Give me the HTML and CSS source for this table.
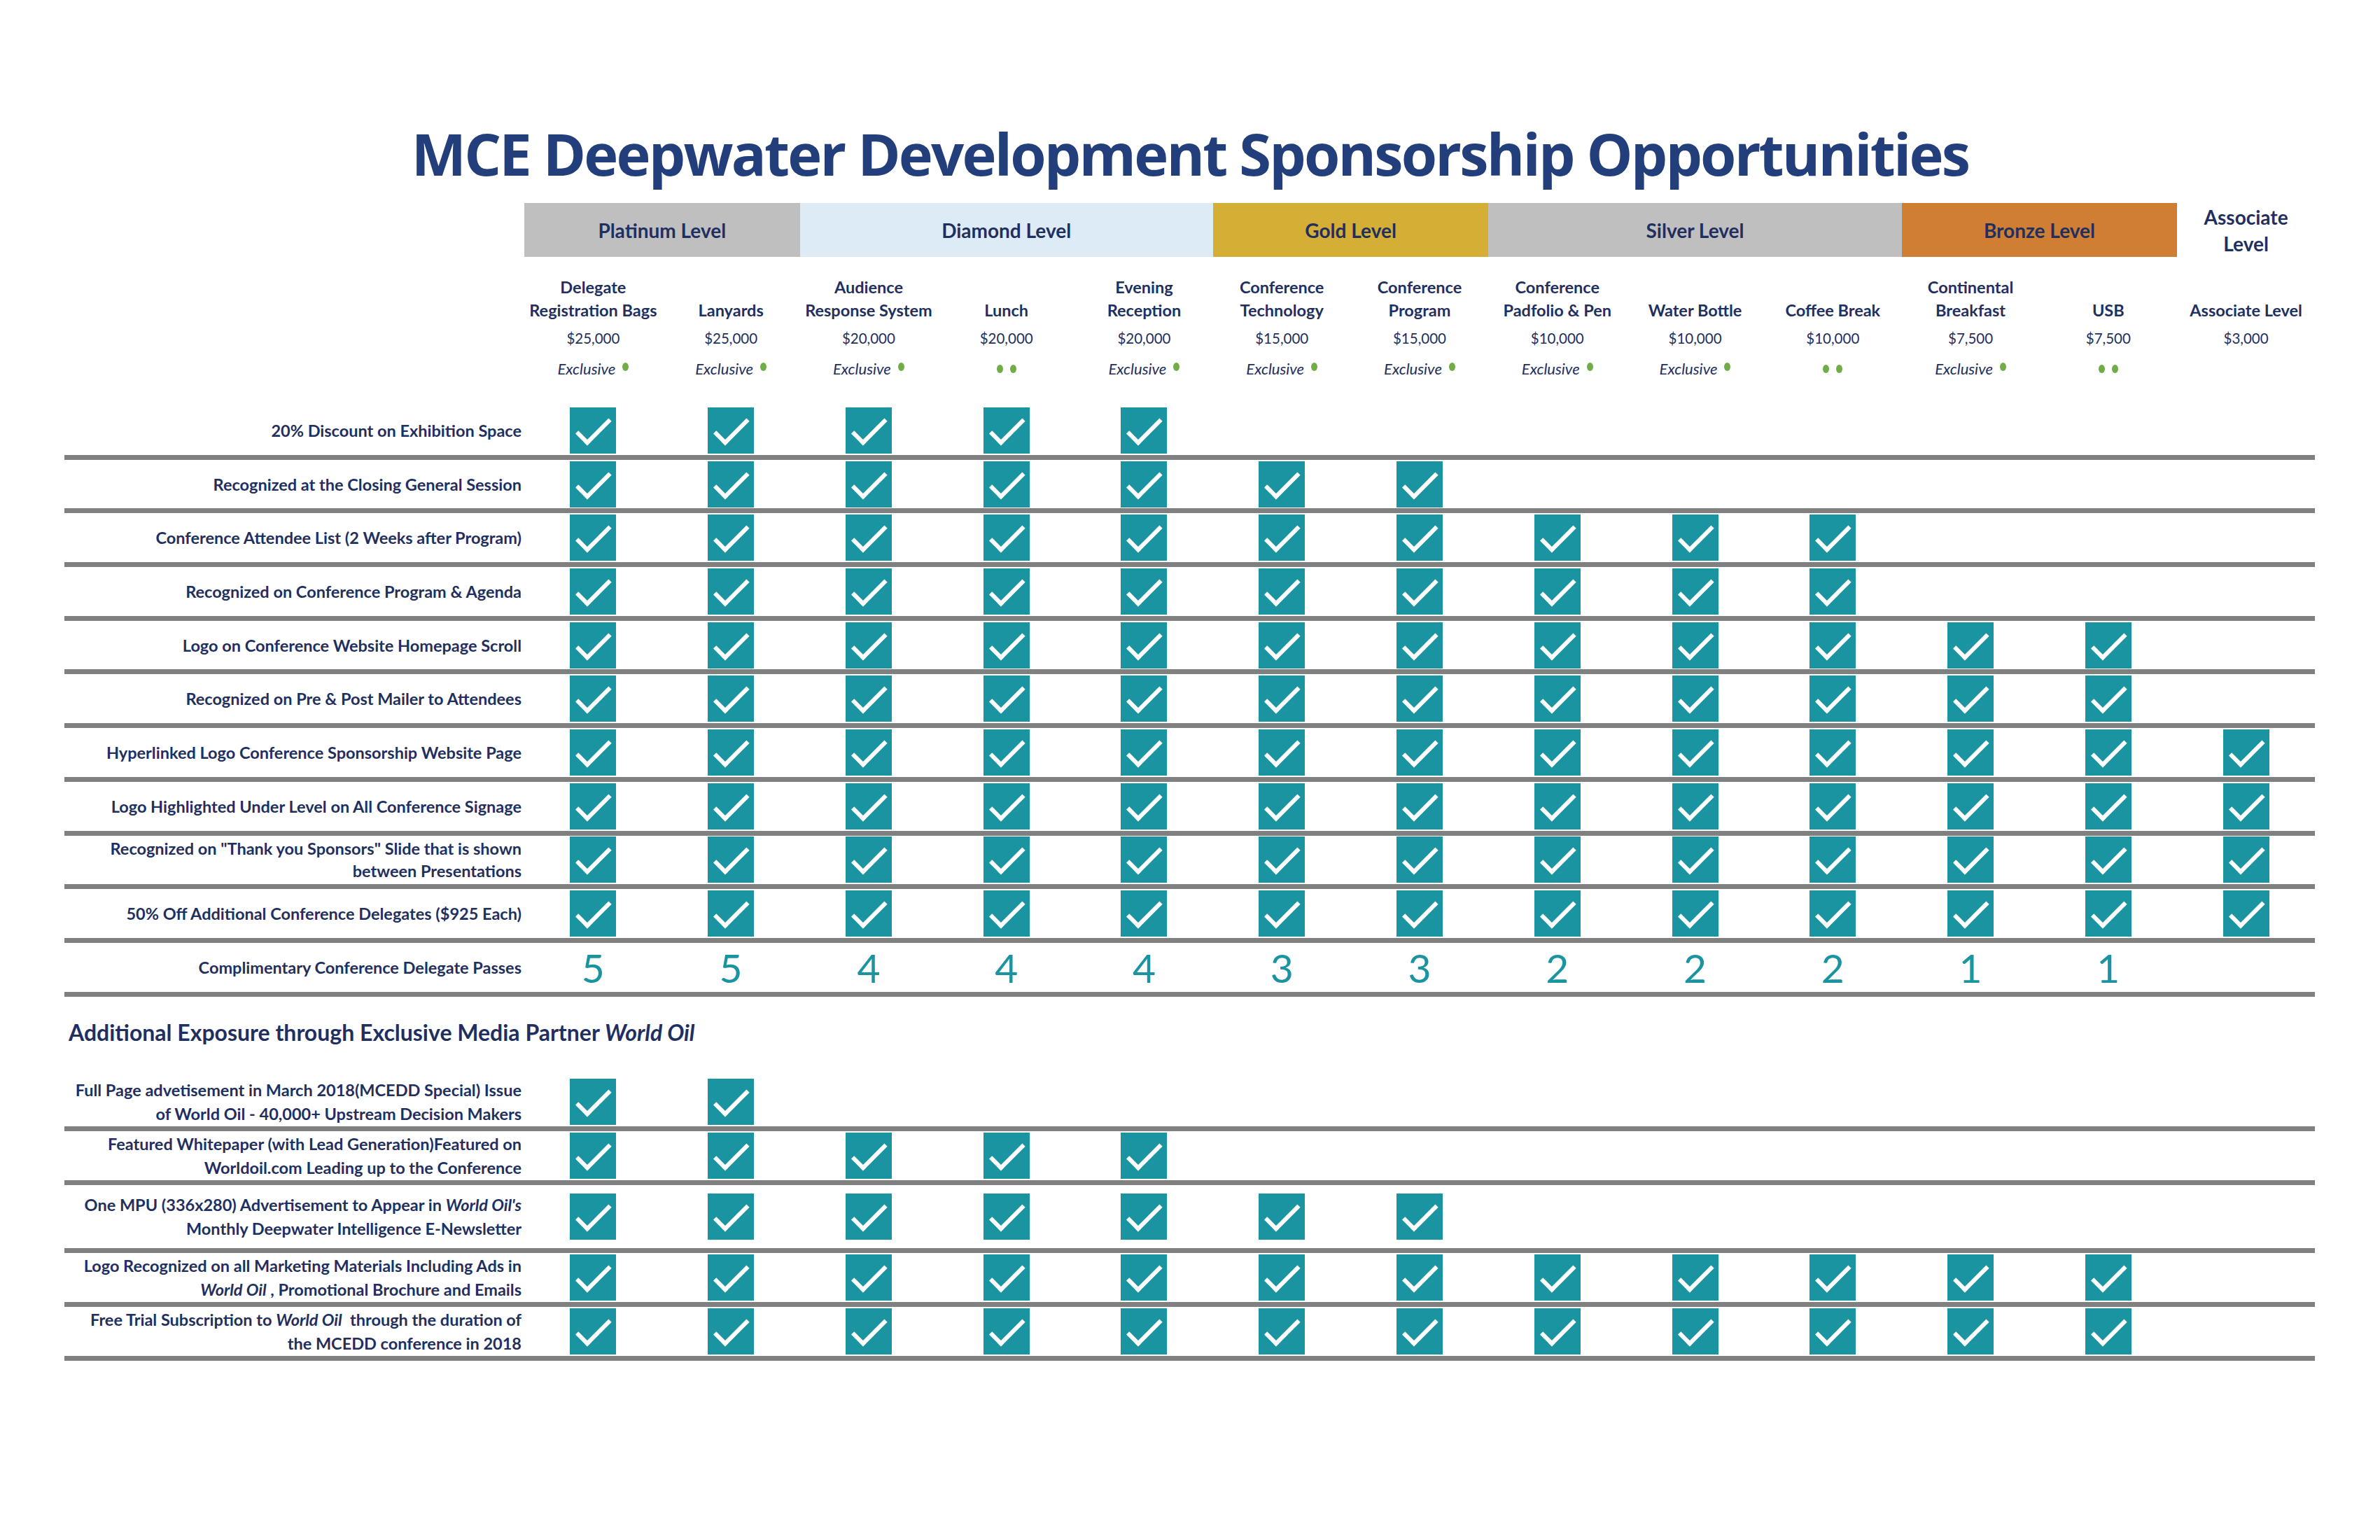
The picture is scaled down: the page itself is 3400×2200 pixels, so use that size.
FILE: index.html
```html
<!DOCTYPE html>
<html lang="en">
<head>
<meta charset="utf-8">
<title>MCE Deepwater Development Sponsorship Opportunities</title>
<link rel="stylesheet" href="styles.css">
</head>
<body>
<h1 class="title">MCE Deepwater Development Sponsorship Opportunities</h1>
<div class="sheet">
  <div class="grid levels">
    <div></div>
    <div class="lv plat">Platinum Level</div>
    <div class="lv dia">Diamond Level</div>
    <div class="lv gold">Gold Level</div>
    <div class="lv silv">Silver Level</div>
    <div class="lv bron">Bronze Level</div>
    <div class="lv assoc">Associate<br>Level</div>
  </div>
  <div class="grid heads">
    <div></div>
    <div class="ch"><div class="nm">Delegate<br>Registration Bags</div><div class="pr">$25,000</div><div class="ex">Exclusive<i class="dot"></i></div></div>
    <div class="ch"><div class="nm">Lanyards</div><div class="pr">$25,000</div><div class="ex">Exclusive<i class="dot"></i></div></div>
    <div class="ch"><div class="nm">Audience<br>Response System</div><div class="pr">$20,000</div><div class="ex">Exclusive<i class="dot"></i></div></div>
    <div class="ch"><div class="nm">Lunch</div><div class="pr">$20,000</div><div class="ex"><i class="dot pair"></i><i class="dot pair"></i></div></div>
    <div class="ch"><div class="nm">Evening<br>Reception</div><div class="pr">$20,000</div><div class="ex">Exclusive<i class="dot"></i></div></div>
    <div class="ch"><div class="nm">Conference<br>Technology</div><div class="pr">$15,000</div><div class="ex">Exclusive<i class="dot"></i></div></div>
    <div class="ch"><div class="nm">Conference<br>Program</div><div class="pr">$15,000</div><div class="ex">Exclusive<i class="dot"></i></div></div>
    <div class="ch"><div class="nm">Conference<br>Padfolio &amp; Pen</div><div class="pr">$10,000</div><div class="ex">Exclusive<i class="dot"></i></div></div>
    <div class="ch"><div class="nm">Water Bottle</div><div class="pr">$10,000</div><div class="ex">Exclusive<i class="dot"></i></div></div>
    <div class="ch"><div class="nm">Coffee Break</div><div class="pr">$10,000</div><div class="ex"><i class="dot pair"></i><i class="dot pair"></i></div></div>
    <div class="ch"><div class="nm">Continental<br>Breakfast</div><div class="pr">$7,500</div><div class="ex">Exclusive<i class="dot"></i></div></div>
    <div class="ch"><div class="nm">USB</div><div class="pr">$7,500</div><div class="ex"><i class="dot pair"></i><i class="dot pair"></i></div></div>
    <div class="ch"><div class="nm">Associate Level</div><div class="pr">$3,000</div></div>
  </div>

  <div class="grid row">
    <div class="lab">20% Discount on Exhibition Space</div>
    <div class="y"></div><div class="y"></div><div class="y"></div><div class="y"></div><div class="y"></div>
  </div>
  <div class="grid row">
    <div class="lab">Recognized at the Closing General Session</div>
    <div class="y"></div><div class="y"></div><div class="y"></div><div class="y"></div><div class="y"></div><div class="y"></div><div class="y"></div>
  </div>
  <div class="grid row">
    <div class="lab">Conference Attendee List (2 Weeks after Program)</div>
    <div class="y"></div><div class="y"></div><div class="y"></div><div class="y"></div><div class="y"></div><div class="y"></div><div class="y"></div><div class="y"></div><div class="y"></div><div class="y"></div>
  </div>
  <div class="grid row">
    <div class="lab">Recognized on Conference Program &amp; Agenda</div>
    <div class="y"></div><div class="y"></div><div class="y"></div><div class="y"></div><div class="y"></div><div class="y"></div><div class="y"></div><div class="y"></div><div class="y"></div><div class="y"></div>
  </div>
  <div class="grid row">
    <div class="lab">Logo on Conference Website Homepage Scroll</div>
    <div class="y"></div><div class="y"></div><div class="y"></div><div class="y"></div><div class="y"></div><div class="y"></div><div class="y"></div><div class="y"></div><div class="y"></div><div class="y"></div><div class="y"></div><div class="y"></div>
  </div>
  <div class="grid row">
    <div class="lab">Recognized on Pre &amp; Post Mailer to Attendees</div>
    <div class="y"></div><div class="y"></div><div class="y"></div><div class="y"></div><div class="y"></div><div class="y"></div><div class="y"></div><div class="y"></div><div class="y"></div><div class="y"></div><div class="y"></div><div class="y"></div>
  </div>
  <div class="grid row">
    <div class="lab">Hyperlinked Logo Conference Sponsorship Website Page</div>
    <div class="y"></div><div class="y"></div><div class="y"></div><div class="y"></div><div class="y"></div><div class="y"></div><div class="y"></div><div class="y"></div><div class="y"></div><div class="y"></div><div class="y"></div><div class="y"></div><div class="y"></div>
  </div>
  <div class="grid row">
    <div class="lab">Logo Highlighted Under Level on All Conference Signage</div>
    <div class="y"></div><div class="y"></div><div class="y"></div><div class="y"></div><div class="y"></div><div class="y"></div><div class="y"></div><div class="y"></div><div class="y"></div><div class="y"></div><div class="y"></div><div class="y"></div><div class="y"></div>
  </div>
  <div class="grid row">
    <div class="lab">Recognized on "Thank you Sponsors" Slide that is shown<br>between Presentations</div>
    <div class="y"></div><div class="y"></div><div class="y"></div><div class="y"></div><div class="y"></div><div class="y"></div><div class="y"></div><div class="y"></div><div class="y"></div><div class="y"></div><div class="y"></div><div class="y"></div><div class="y"></div>
  </div>
  <div class="grid row">
    <div class="lab">50% Off Additional Conference Delegates ($925 Each)</div>
    <div class="y"></div><div class="y"></div><div class="y"></div><div class="y"></div><div class="y"></div><div class="y"></div><div class="y"></div><div class="y"></div><div class="y"></div><div class="y"></div><div class="y"></div><div class="y"></div><div class="y"></div>
  </div>
  <div class="grid row">
    <div class="lab">Complimentary Conference Delegate Passes</div>
    <div class="n">5</div><div class="n">5</div><div class="n">4</div><div class="n">4</div><div class="n">4</div><div class="n">3</div><div class="n">3</div><div class="n">2</div><div class="n">2</div><div class="n">2</div><div class="n">1</div><div class="n">1</div>
  </div>

  <h2 class="sub">Additional Exposure through Exclusive Media Partner <em>World Oil</em></h2>

  <div class="grid row r2">
    <div class="lab">Full Page advetisement in March 2018(MCEDD Special) Issue<br>of World Oil - 40,000+ Upstream Decision Makers</div>
    <div class="y"></div><div class="y"></div>
  </div>
  <div class="grid row r2">
    <div class="lab">Featured Whitepaper (with Lead Generation)Featured on<br>Worldoil.com Leading up to the Conference</div>
    <div class="y"></div><div class="y"></div><div class="y"></div><div class="y"></div><div class="y"></div>
  </div>
  <div class="grid row r2 tall">
    <div class="lab">One MPU (336x280) Advertisement to Appear in <em>World Oil's</em><br>Monthly Deepwater Intelligence E-Newsletter</div>
    <div class="y"></div><div class="y"></div><div class="y"></div><div class="y"></div><div class="y"></div><div class="y"></div><div class="y"></div>
  </div>
  <div class="grid row r2">
    <div class="lab">Logo Recognized on all Marketing Materials Including Ads in<br><em>World Oil</em> , Promotional Brochure and Emails</div>
    <div class="y"></div><div class="y"></div><div class="y"></div><div class="y"></div><div class="y"></div><div class="y"></div><div class="y"></div><div class="y"></div><div class="y"></div><div class="y"></div><div class="y"></div><div class="y"></div>
  </div>
  <div class="grid row r2">
    <div class="lab">Free Trial Subscription to <em>World Oil</em>&nbsp; through the duration of<br>the MCEDD conference in 2018</div>
    <div class="y"></div><div class="y"></div><div class="y"></div><div class="y"></div><div class="y"></div><div class="y"></div><div class="y"></div><div class="y"></div><div class="y"></div><div class="y"></div><div class="y"></div><div class="y"></div>
  </div>
</div>
</body>
</html>
```
FILE: styles.css
```css
* { box-sizing: border-box; }

html, body {
  margin: 0;
  background: #ffffff;
}

body {
  width: 3400px;
  height: 2200px;
  overflow: hidden;
  font-family: Lato, "Open Sans", sans-serif;
  color: #1f2f5f;
}

.title {
  margin: 0 0 21px 0;
  padding-top: 169px;
  text-align: center;
  font-family: "Open Sans", sans-serif;
  font-weight: 700;
  font-size: 83px;
  line-height: 100px;
  letter-spacing: -2.8px;
  color: #223f7b;
}

.sheet {
  margin-left: 92px;
  width: 3215px;
}

.grid {
  display: grid;
  grid-template-columns: 657px repeat(13, 1fr);
}

/* level bar */
.levels { height: 77px; }

.lv {
  display: flex;
  align-items: center;
  justify-content: center;
  text-align: center;
  font-weight: 700;
  font-size: 28px;
  color: #1f2f5f;
}
.plat { grid-column: 2 / span 2; background: #bfbfbf; }
.dia  { grid-column: 4 / span 3; background: #ddebf7; }
.gold { grid-column: 7 / span 2; background: #d5ae35; }
.silv { grid-column: 9 / span 3; background: #bfbfbf; }
.bron { grid-column: 12 / span 2; background: #cf7e33; }
.assoc { grid-column: 14; line-height: 38px; }

/* column headers */
.heads {
  height: 213px;
  padding-top: 27px;
  align-items: start;
}
.ch {
  display: flex;
  flex-direction: column;
  align-items: center;
  text-align: center;
}
.nm {
  height: 66px;
  display: flex;
  flex-direction: column;
  justify-content: flex-end;
  font-weight: 700;
  font-size: 23.5px;
  line-height: 33px;
  white-space: nowrap;
}
.pr {
  margin-top: 8px;
  font-size: 20.5px;
  line-height: 30px;
}
.ex {
  margin-top: 14px;
  text-align: center;
  font-style: italic;
  font-size: 22px;
  line-height: 30px;
  white-space: nowrap;
}
.dot {
  display: inline-block;
  width: 9px;
  height: 12px;
  margin-left: 10px;
  vertical-align: 5px;
  border-radius: 50%;
  background: #70ad47;
}
.dot.pair { margin: 0 5px; vertical-align: 2px; }

/* rows */
.row {
  height: 76.7px;
  border-bottom: 7px solid #808080;
  align-items: stretch;
}
.lab {
  align-self: center;
  text-align: right;
  padding-right: 4px;
  font-weight: 700;
  font-size: 23.5px;
  line-height: 32px;
  white-space: nowrap;
}
.r2 { height: 77px; }
.r2 .lab { line-height: 34px; }
.tall { height: 97px; }

.y {
  position: relative;
  display: flex;
  align-items: center;
  justify-content: center;
}
.y::before {
  content: "";
  width: 66px;
  height: 66px;
  background: #1a94a0;
}
.y::after {
  content: "";
  position: absolute;
  left: 50%;
  top: 50%;
  width: 18px;
  height: 43px;
  border-right: 6px solid #ffffff;
  border-bottom: 6px solid #ffffff;
  transform: translate(-50%, -50%) translate(0.8px, -4.3px) rotate(45deg);
}

.n {
  display: flex;
  align-items: center;
  justify-content: center;
  padding-top: 1px;
  font-size: 57px;
  line-height: 57px;
  color: #1a94a0;
}

.sub {
  margin: 31px 0 44px 6px;
  font-weight: 700;
  font-size: 32px;
  line-height: 40px;
  color: #1f2f5f;
}
```
